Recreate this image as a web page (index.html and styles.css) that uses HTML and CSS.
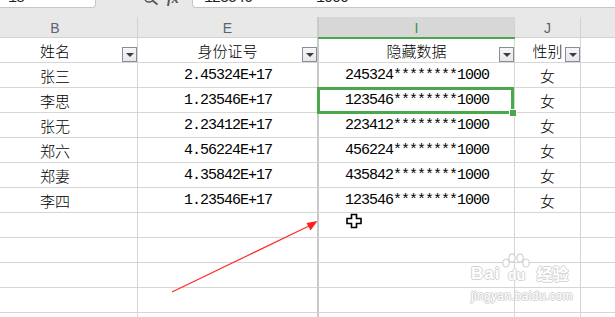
FILE: index.html
```html
<!DOCTYPE html>
<html lang="zh-CN">
<head>
<meta charset="utf-8">
<title>隐藏数据</title>
<link rel="stylesheet" href="styles.css">
</head>
<body>
<div class="topbar">
  <div class="namebox"><span class="nb-text">18</span></div>
  <div class="tools">
    <svg class="tools-svg" width="96" height="8" viewBox="0 0 96 8">
      <circle cx="53" cy="-2.5" r="4.5" fill="none" stroke="#555" stroke-width="1.4"/>
      <line x1="56.5" y1="0.5" x2="61.5" y2="4.5" stroke="#555" stroke-width="1.8"/>
      <text x="71" y="3" class="fx">fx</text>
    </svg>
  </div>
  <div class="formula"><span class="fm-text">123546********1000</span></div>
</div>
<div class="band"></div>
<div class="sheet">
  <div class="hd c-b">B</div>
  <div class="hd c-e">E</div>
  <div class="hd c-i hd-sel">I</div>
  <div class="hd c-j">J</div>
  <div class="hd c-k"></div>

  <div class="cell c-b cn">姓名<span class="dd dd-b"></span></div>
  <div class="cell c-e cn">身份证号<span class="dd"></span></div>
  <div class="cell c-i cn">隐藏数据<span class="dd"></span></div>
  <div class="cell c-j cn">性别<span class="dd"></span></div>
  <div class="cell c-k"></div>

  <div class="cell c-b cn">张三</div>
  <div class="cell c-e num">2.45324E+17</div>
  <div class="cell c-i num">245324********1000</div>
  <div class="cell c-j cn">女</div>
  <div class="cell c-k"></div>

  <div class="cell c-b cn">李思</div>
  <div class="cell c-e num">1.23546E+17</div>
  <div class="cell c-i num active">123546********1000<span class="sel"></span><span class="handle"></span></div>
  <div class="cell c-j cn">女</div>
  <div class="cell c-k"></div>

  <div class="cell c-b cn">张无</div>
  <div class="cell c-e num">2.23412E+17</div>
  <div class="cell c-i num">223412********1000</div>
  <div class="cell c-j cn">女</div>
  <div class="cell c-k"></div>

  <div class="cell c-b cn">郑六</div>
  <div class="cell c-e num">4.56224E+17</div>
  <div class="cell c-i num">456224********1000</div>
  <div class="cell c-j cn">女</div>
  <div class="cell c-k"></div>

  <div class="cell c-b cn">郑妻</div>
  <div class="cell c-e num">4.35842E+17</div>
  <div class="cell c-i num">435842********1000</div>
  <div class="cell c-j cn">女</div>
  <div class="cell c-k"></div>

  <div class="cell c-b cn">李四</div>
  <div class="cell c-e num">1.23546E+17</div>
  <div class="cell c-i num">123546********1000</div>
  <div class="cell c-j cn">女</div>
  <div class="cell c-k"></div>

  <div class="cell c-b"></div><div class="cell c-e"></div><div class="cell c-i"></div><div class="cell c-j"></div><div class="cell c-k"></div>
  <div class="cell c-b"></div><div class="cell c-e"></div><div class="cell c-i"></div><div class="cell c-j"></div><div class="cell c-k"></div>
  <div class="cell c-b"></div><div class="cell c-e"></div><div class="cell c-i"></div><div class="cell c-j"></div><div class="cell c-k"></div>
  <div class="cell c-b"></div><div class="cell c-e"></div><div class="cell c-i"></div><div class="cell c-j"></div><div class="cell c-k"></div>
  <div class="cell c-b"></div><div class="cell c-e"></div><div class="cell c-i"></div><div class="cell c-j"></div><div class="cell c-k"></div>
</div>

<svg class="overlay" width="615" height="317" viewBox="0 0 615 317">
  <line x1="172" y1="292" x2="309" y2="226" stroke="#ff2a2a" stroke-width="1.2"/>
  <polygon points="317.5,221 306.5,223 310.5,230.5" fill="#ff1f1f"/>
  <path d="M351.5 214.5 h5 v4 h4.5 v5 h-4.5 v4 h-5 v-4 h-4.5 v-5 h4.5 z" fill="#ffffff" stroke="#000" stroke-width="1.6" stroke-linejoin="miter"/>
</svg>

<div class="watermark">
  <div class="wm-row">
    <span class="wm-bai">Bai</span>
    <span class="wm-paw">
      <svg class="paw" width="30" height="16" viewBox="0 0 30 16">
        <ellipse cx="5" cy="10" rx="3.2" ry="4" fill="#fff" stroke="#d2d2d2" stroke-width="1.2"/>
        <ellipse cx="11" cy="5" rx="3.2" ry="4.2" fill="#fff" stroke="#d2d2d2" stroke-width="1.2"/>
        <ellipse cx="19" cy="5" rx="3.2" ry="4.2" fill="#fff" stroke="#d2d2d2" stroke-width="1.2"/>
        <ellipse cx="25" cy="10" rx="3.2" ry="4" fill="#fff" stroke="#d2d2d2" stroke-width="1.2"/>
      </svg>
      <span class="wm-du">du</span>
    </span>
    <span class="wm-jy">经验</span>
  </div>
  <div class="wm-url">jingyan.baidu.com</div>
</div>
</body>
</html>
```
FILE: styles.css
```css
* { box-sizing: border-box; }
html, body {
  margin: 0;
  padding: 0;
  width: 615px;
  height: 317px;
  overflow: hidden;
  background: #ffffff;
}
body {
  position: relative;
  font-family: "Noto Sans CJK SC", "Liberation Sans", sans-serif;
  color: #000;
}

/* formula bar (mostly scrolled off the top) */
.topbar {
  display: flex;
  height: 9px;
  background: #e8e8e8;
  overflow: hidden;
}
.namebox {
  width: 96px;
  height: 30px;
  margin-top: -22px;
  background: #fff;
  border: 1px solid #c6c6c6;
  border-radius: 0 0 4px 0;
  border-left: none;
  display: flex;
  align-items: flex-end;
  padding: 0 0 1px 8px;
}
.nb-text, .fm-text {
  font-family: "Liberation Mono", monospace;
  font-size: 15px;
  line-height: 15px;
  letter-spacing: -1px;
  color: #222;
}
.tools {
  width: 96px;
  flex: none;
}
.tools-svg { display: block; }
.fx {
  font-family: "Liberation Serif", serif;
  font-style: italic;
  font-weight: bold;
  font-size: 14px;
  fill: #555;
}
.formula {
  flex: 1;
  height: 30px;
  margin-top: -22px;
  background: #fff;
  border: 1px solid #c6c6c6;
  border-right: none;
  border-radius: 0 0 0 4px;
  display: flex;
  align-items: flex-end;
  padding: 0 0 1px 11px;
}

.band {
  height: 8px;
  background: #e8e8e8;
}

/* sheet grid */
.sheet {
  margin-left: -27px;
  display: grid;
  grid-template-columns: 165px 181px 196px 66px 60px;
  grid-template-rows: 21px;
  grid-auto-rows: 25px;
}
.hd, .cell {
  position: relative;
  display: flex;
  align-items: center;
  justify-content: center;
  border-right: 1px solid #d6d6d6;
  border-bottom: 1px solid #d6d6d6;
  white-space: nowrap;
}
.hd {
  background: #e8e8e8;
  border-color: #d2d2d2;
  font-family: "Liberation Sans", sans-serif;
  font-size: 14px;
  color: #5c6470;
  padding-top: 1px;
}
.hd-sel {
  background: #d7d7d7;
  color: #3b8f4a;
}
.hd-sel::after {
  content: "";
  position: absolute;
  left: -1px;
  right: -1px;
  bottom: -2px;
  height: 2px;
  background: #4ca64c;
  z-index: 2;
}
.c-e { border-right: 2px solid #c9c9c9; }
.hd.c-e { border-right: 2px solid #cacaca; }

.cn {
  font-family: "Noto Sans CJK SC", sans-serif;
  font-size: 15px;
  font-weight: 300;
}
.num {
  font-family: "Liberation Mono", "DejaVu Sans Mono", monospace;
  font-size: 15px;
  letter-spacing: -1px;
  padding-left: 1px;
}

/* filter dropdown buttons */
.dd {
  position: absolute;
  right: 0;
  bottom: 0;
  width: 15px;
  height: 15px;
  border: 1px solid #8c8c98;
  background: linear-gradient(#f6f6f8, #e6e6ec);
}
.dd::after {
  content: "";
  position: absolute;
  left: 3px;
  top: 5px;
  border-left: 4px solid transparent;
  border-right: 4px solid transparent;
  border-top: 4px solid #3c3c3c;
}

/* active cell */
.sel {
  position: absolute;
  left: -2px;
  top: -1px;
  width: 197px;
  height: 27px;
  border: 3px solid #4ca64c;
  z-index: 3;
}
.handle {
  position: absolute;
  left: 190px;
  top: 21px;
  width: 8px;
  height: 8px;
  background: #4ca64c;
  border: 1px solid #fff;
  z-index: 4;
}

/* annotations over the sheet */
.overlay {
  position: absolute;
  left: 0;
  top: 0;
  pointer-events: none;
}

.watermark {
  position: absolute;
  left: 471px;
  top: 252px;
  color: #fff;
  font-family: "Liberation Sans", sans-serif;
  font-weight: bold;
  text-shadow: 1px 0 #d4d4d4, -1px 0 #d4d4d4, 0 1px #d4d4d4, 0 -1px #d4d4d4;
}
.wm-row {
  display: flex;
  align-items: flex-end;
  height: 30px;
}
.wm-bai {
  font-size: 17px;
  line-height: 17px;
  letter-spacing: 1px;
}
.wm-paw {
  display: flex;
  flex-direction: column;
  align-items: center;
  margin-left: 1px;
}
.paw { display: block; }
.wm-du {
  font-size: 14px;
  line-height: 14px;
  margin-top: -1px;
}
.wm-jy {
  font-family: "Noto Sans CJK SC", sans-serif;
  font-size: 16px;
  line-height: 17px;
  margin-left: 5px;
}
.wm-url {
  margin-top: 8px;
  font-size: 12px;
  line-height: 13px;
  font-weight: normal;
  letter-spacing: 0.3px;
}
```
